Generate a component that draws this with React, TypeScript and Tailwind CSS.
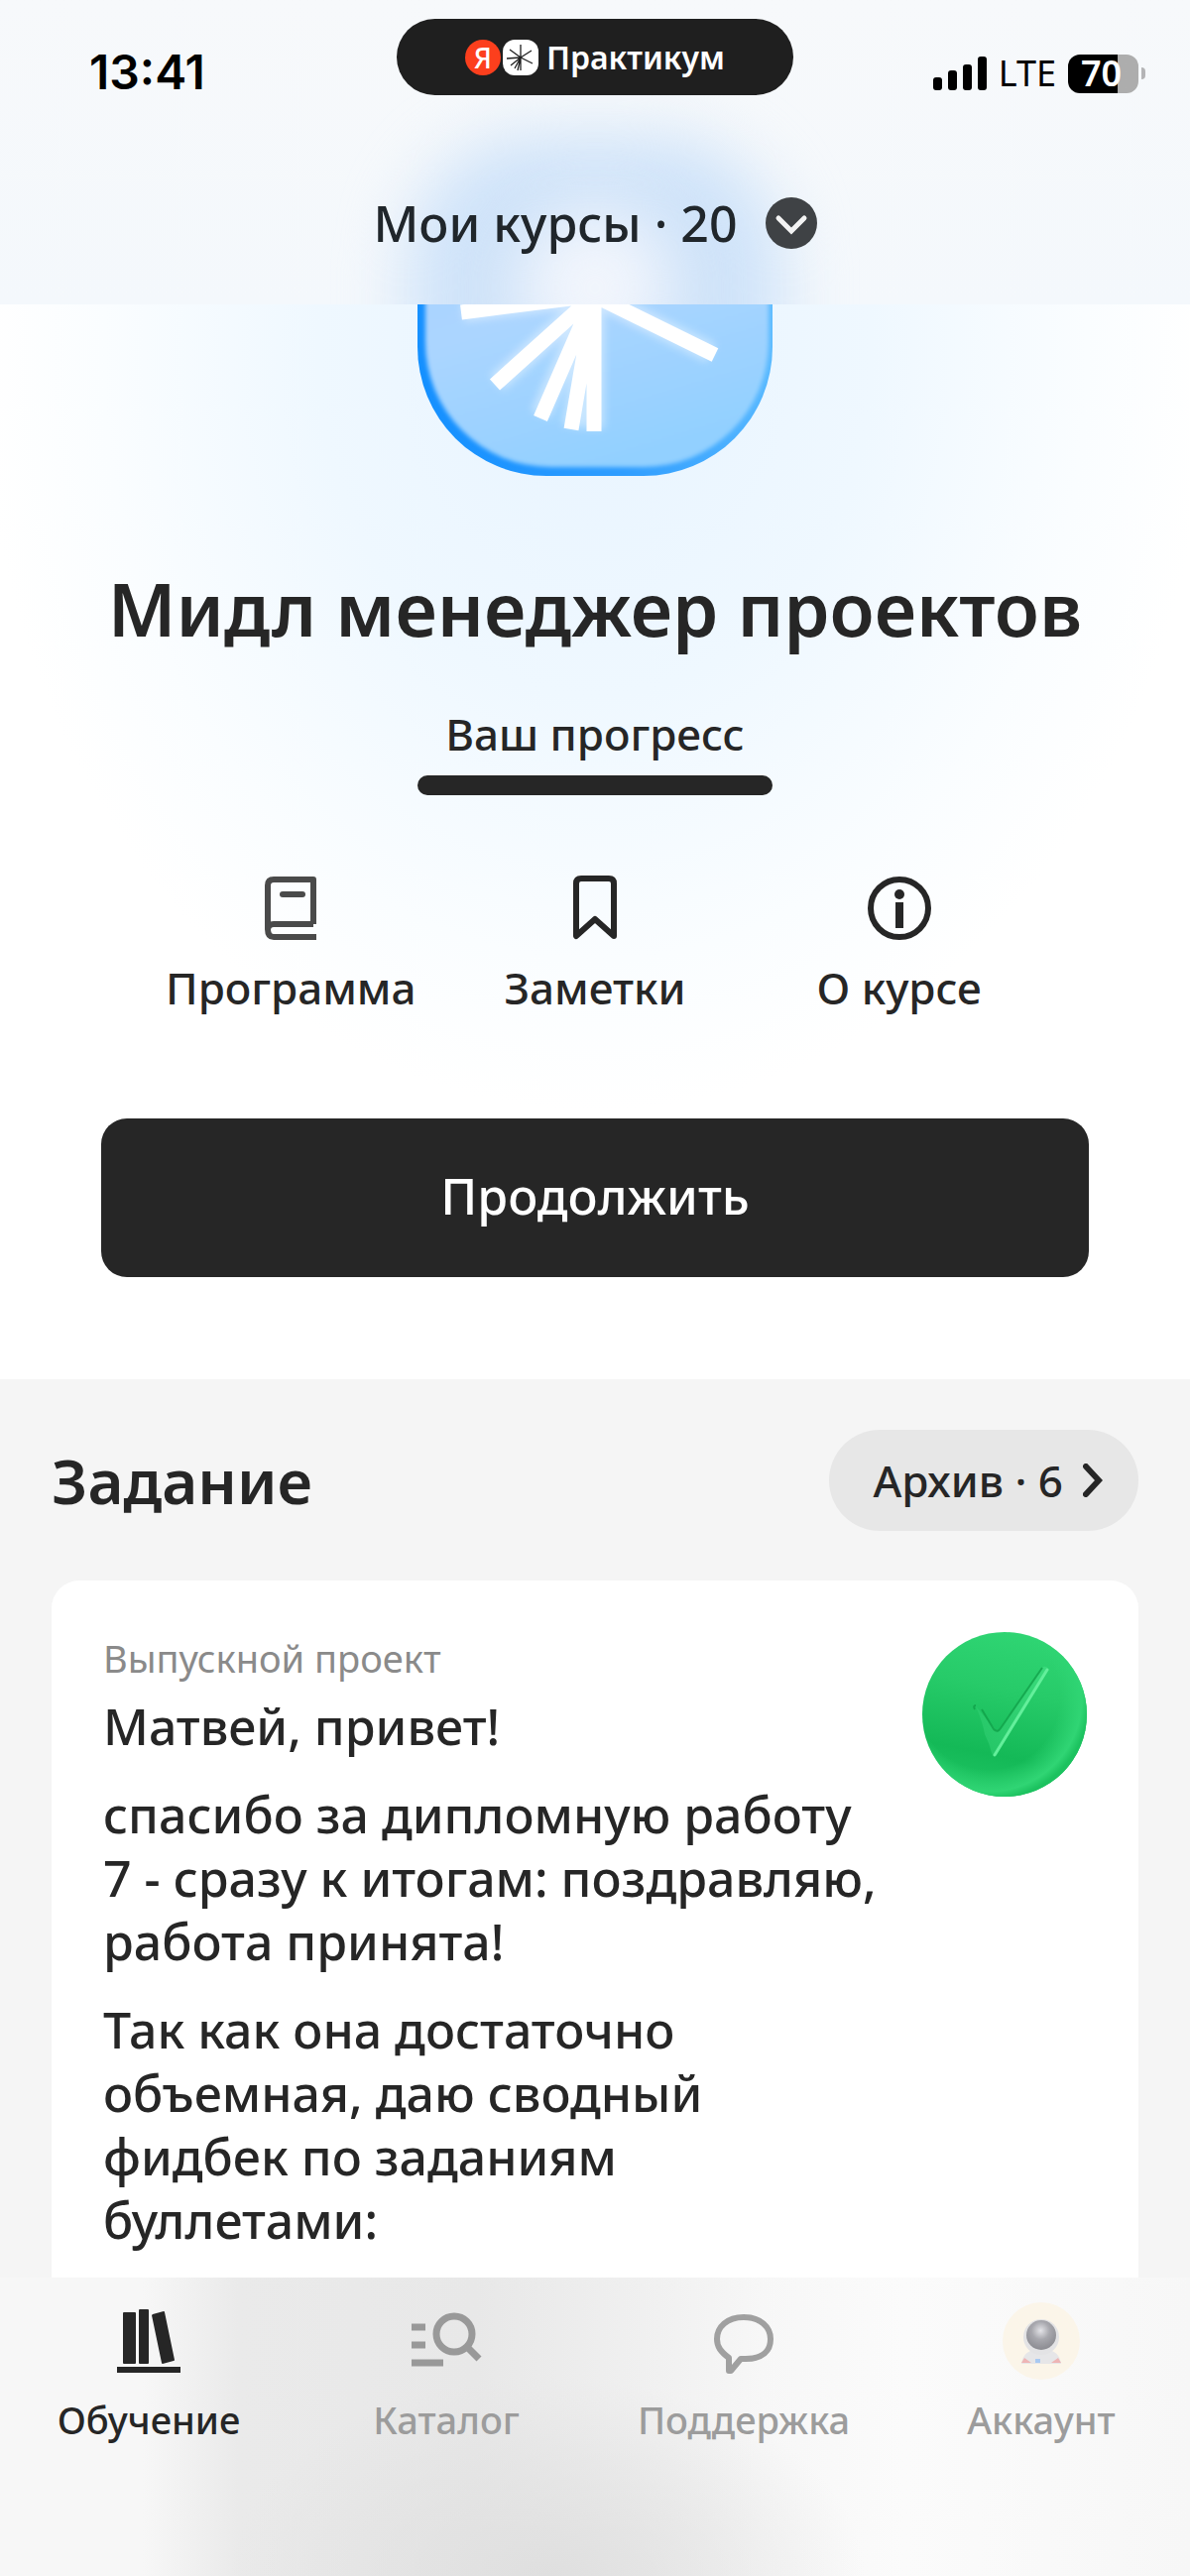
import React from 'react';

type IconProps = { className?: string };

function SparkIcon({ className }: IconProps) {
  return (
    <svg viewBox="0 0 36 36" className={className} aria-hidden="true">
      <rect width="36" height="36" rx="12" fill="#fff" />
      <path
        d="M18 18V5M18 18l11-7M18 18l12 6M18 18v13M18 18l-3 13M18 18l-6 11M18 18L8 26M18 18L4 19M18 18L7 10"
        stroke="#1f1f1f"
        strokeWidth="1.3"
      />
    </svg>
  );
}

function CourseLogo({ className }: IconProps) {
  return (
    <svg viewBox="0 0 358 358" className={className} aria-hidden="true">
      <defs>
        <linearGradient id="tile" x1="0.2" y1="0" x2="0.5" y2="1">
          <stop offset="0" stopColor="#a9cdff" />
          <stop offset="0.55" stopColor="#abd5ff" />
          <stop offset="1" stopColor="#92d0ff" />
        </linearGradient>
        <linearGradient id="rim" x1="0" y1="0.7" x2="1" y2="0.5">
          <stop offset="0" stopColor="#1590ff" />
          <stop offset="0.5" stopColor="#2f9dff" />
          <stop offset="1" stopColor="#5dbcff" />
        </linearGradient>
        <filter id="rimBlur" x="-10%" y="-10%" width="120%" height="120%">
          <feGaussianBlur stdDeviation="2" />
        </filter>
        <filter id="glow" x="-10%" y="-10%" width="120%" height="120%">
          <feGaussianBlur stdDeviation="4" />
        </filter>
        <clipPath id="tileClip">
          <rect width="358" height="358" rx="130" />
        </clipPath>
      </defs>
      <g clipPath="url(#tileClip)">
        <rect width="358" height="358" fill="url(#rim)" />
        <rect x="8" y="4" width="346" height="345" rx="126" fill="url(#tile)" filter="url(#rimBlur)" />
      </g>
      <path
        d="M178 176V310M178 176L156 308M178 176L124 296M178 176L80 264M178 176L46 192M178 176L296 234"
        stroke="#fff"
        strokeWidth="20"
        opacity="0.45"
        filter="url(#glow)"
      />
      <path
        d="M178 170V44M178 176V313M178 176L155 311M178 176L124 300M178 176L78 266M178 176L44 193M178 176L300 236M178 176L286 106M178 176L70 96"
        stroke="#fff"
        strokeWidth="15"
      />
    </svg>
  );
}

function BookIcon({ className }: IconProps) {
  return (
    <svg viewBox="0 0 72 72" className={className} fill="none" stroke="#4a4a4a" strokeWidth="6" aria-hidden="true">
      <path d="M59 52V7H19q-6 0-6 6v44q0 8 6 8h43M13 58q0-6 6-6h40" strokeLinejoin="round" />
      <path d="M28 22h20" strokeLinecap="round" />
    </svg>
  );
}

function BookmarkIcon({ className }: IconProps) {
  return (
    <svg viewBox="0 0 72 72" className={className} fill="none" stroke="#262626" strokeWidth="6" strokeLinejoin="round" aria-hidden="true">
      <path d="M17 64V11q0-5 5-5h28q5 0 5 5v53L36 47z" />
    </svg>
  );
}

function InfoIcon({ className }: IconProps) {
  return (
    <svg viewBox="0 0 72 72" className={className} aria-hidden="true">
      <circle cx="36" cy="36" r="29" fill="none" stroke="#262626" strokeWidth="6" />
      <circle cx="36" cy="22" r="5" fill="#262626" />
      <rect x="32" y="30" width="8" height="26" fill="#262626" />
    </svg>
  );
}

function DoneBadge({ className }: IconProps) {
  return (
    <svg viewBox="0 0 166 166" className={className} role="img" aria-label="Принято">
      <defs>
        <linearGradient id="green" x1="0.6" y1="0" x2="0.4" y2="1">
          <stop offset="0" stopColor="#2fd573" />
          <stop offset="0.35" stopColor="#27cb69" />
          <stop offset="0.75" stopColor="#14b957" />
          <stop offset="1" stopColor="#1fc563" />
        </linearGradient>
        <radialGradient id="edge" cx="0.4" cy="0.4" r="0.62">
          <stop offset="0.7" stopColor="#30d574" stopOpacity="0" />
          <stop offset="0.92" stopColor="#30d574" />
          <stop offset="1" stopColor="#1cc25f" />
        </radialGradient>
        <linearGradient id="tick" x1="0" y1="1" x2="1" y2="0">
          <stop offset="0" stopColor="#23c465" />
          <stop offset="1" stopColor="#3adb7c" />
        </linearGradient>
      </defs>
      <circle cx="83" cy="83" r="83" fill="url(#green)" />
      <circle cx="83" cy="83" r="83" fill="url(#edge)" />
      <path d="M54 75L76 101L121 36q3-3 6 1L75 124q-3 3-5-2-2-9-7-19-2-12-9-28z" fill="url(#tick)" />
      <path d="M53 78q-2-4 1-4M60 78l12 20q4 4 7-1L121 36" fill="none" stroke="#10a049" strokeWidth="2" opacity="0.8" />
      <path d="M126 38L73 124" stroke="#63ef9b" strokeWidth="3" strokeLinecap="round" />
    </svg>
  );
}

function BooksIcon({ className }: IconProps) {
  return (
    <svg viewBox="0 0 72 72" className={className} fill="#262626" aria-hidden="true">
      <rect x="10" y="7" width="13" height="52" rx="1" />
      <rect x="26" y="4" width="10" height="55" rx="1" />
      <path d="M40 9l11-3q1 0 1 1l10 48q0 1-1 1l-11 3q-1 0-1-1L39 10z" />
      <rect x="4" y="62" width="64" height="6" />
    </svg>
  );
}

function CatalogIcon({ className }: IconProps) {
  return (
    <svg viewBox="0 0 72 72" className={className} fill="none" stroke="#999" strokeWidth="7" aria-hidden="true">
      <path d="M1 22h14M1 40h14M1 58h32" />
      <circle cx="44" cy="29" r="18" />
      <path d="M57 42l12 12" />
    </svg>
  );
}

function ChatIcon({ className }: IconProps) {
  return (
    <svg viewBox="0 0 72 72" className={className} fill="none" stroke="#a0a0a0" strokeWidth="6" strokeLinejoin="round" aria-hidden="true">
      <path d="M36 12C19 12 9 22 9 34c0 8 4 13 12 19v13h2l10-12h5c17 0 25-8 25-20S53 12 36 12z" />
    </svg>
  );
}

function AccountIcon({ className }: IconProps) {
  return (
    <svg viewBox="0 0 80 80" className={className} aria-hidden="true">
      <defs>
        <radialGradient id="visor" cx="0.48" cy="0.35" r="0.6">
          <stop offset="0" stopColor="#e4e4e8" />
          <stop offset="0.5" stopColor="#a8a8ae" />
          <stop offset="1" stopColor="#8f8f95" />
        </radialGradient>
      </defs>
      <circle cx="40" cy="40" r="39" fill="#fbf5e9" />
      <path d="M20 63q2-13 14-14h12q12 1 14 14z" fill="#e6e6e8" />
      <path d="M20 62l3-5 7 5zM60 62l-3-5-7 5z" fill="#eeb5b5" />
      <rect x="34" y="58" width="5" height="4" fill="#a9c9f2" />
      <circle cx="40" cy="36" r="18" fill="#e3e3e5" />
      <circle cx="40" cy="34" r="15" fill="url(#visor)" />
    </svg>
  );
}

const actions = [
  { label: 'Программа', icon: BookIcon },
  { label: 'Заметки', icon: BookmarkIcon },
  { label: 'О курсе', icon: InfoIcon },
];

const tabs = [
  { label: 'Обучение', icon: BooksIcon, active: true },
  { label: 'Каталог', icon: CatalogIcon, active: false },
  { label: 'Поддержка', icon: ChatIcon, active: false },
  { label: 'Аккаунт', icon: AccountIcon, active: false },
];

function StatusBar() {
  return (
    <div className="relative grid grid-cols-3 items-start px-[45px] pt-[19px]">
      <div className="pt-[22px] pl-[45px] font-['Inter',sans-serif] text-[48px] leading-[64px] font-semibold text-black">
        13:41
      </div>

      <div className="flex h-[77px] w-[400px] items-center justify-center justify-self-center rounded-full bg-[#1f1f1f]">
        <span className="flex size-9 items-center justify-center rounded-full bg-[#fc3f1d] text-[28px] font-medium text-white">
          Я
        </span>
        <SparkIcon className="ml-[2px] size-9" />
        <span className="ml-2 text-[32px] leading-10 font-semibold text-white">Практикум</span>
      </div>

      <div className="flex h-[110px] items-center justify-end">
        <svg viewBox="0 0 54 34" className="h-[34px] w-[54px]" aria-hidden="true">
          <rect x="0" y="21" width="9" height="13" rx="3" />
          <rect x="15" y="14" width="9" height="20" rx="3" />
          <rect x="30" y="8" width="9" height="26" rx="3" />
          <rect x="45" y="0" width="9" height="34" rx="3" />
        </svg>
        <span className="ml-3 text-[36px] leading-10 text-black">LTE</span>
        <span className="ml-3 flex h-[39px] w-[71px] items-center justify-center rounded-xl bg-linear-to-r from-black from-70% to-[#adadad] to-70% pr-1 text-[36px] font-semibold text-white">
          70
        </span>
        <span className="ml-[3px] h-3 w-1 rounded-r-full bg-[#b4b4b6]" />
      </div>
    </div>
  );
}

export default function App() {
  return (
    <div className="flex min-h-screen flex-col bg-white font-['Noto_Sans','Open_Sans',sans-serif] text-[#262626]">
      {/* Header */}
      <header className="sticky top-0 z-10 h-[307px] overflow-hidden bg-linear-to-b from-[#f7f9fb] to-[#f4f8fc]">
        {/* Frosted glow of the course logo */}
        <div className="absolute top-[136px] left-1/2 h-[358px] w-[380px] -translate-x-1/2 rounded-[130px] bg-[#cfe3f9] blur-[32px]" />
        <div className="absolute top-[210px] left-1/2 h-[160px] w-[150px] -translate-x-1/2 rounded-full bg-[#f1f5fc] blur-[32px]" />
        <StatusBar />
        <div className="relative flex justify-center pt-16">
          <button type="button" className="flex items-center gap-7 text-[50px] leading-[64px] font-medium text-[#20262b]">
            Мои курсы · 20
            <svg viewBox="0 0 52 52" className="size-[52px]" aria-hidden="true">
              <circle cx="26" cy="26" r="26" fill="#3f4245" />
              <path d="M13 21l13 13 13-13" fill="none" stroke="#f3f3f3" strokeWidth="5" strokeLinecap="round" />
            </svg>
          </button>
        </div>
      </header>

      {/* Course */}
      <section className="-mt-[307px] bg-[radial-gradient(ellipse_620px_760px_at_50%_360px,#e8f4ff_0%,#eff8ff_45%,#fafdff_80%,#ffffff_100%)] px-[102px] pt-[122px] pb-[103px]">
        <CourseLogo className="mx-auto size-[358px]" />
        <h1 className="mt-[82px] text-center text-[74px] leading-[104px] font-semibold whitespace-nowrap">
          Мидл менеджер проектов
        </h1>

        <div className="mx-auto mt-11 flex w-[358px] flex-col items-center">
          <span className="text-[44px] leading-[60px] font-medium">Ваш прогресс</span>
          <div role="progressbar" aria-label="Ваш прогресс" aria-valuenow={100} className="mt-3 h-5 w-full rounded-full bg-[#262626]" />
        </div>

        <div className="mt-[78px] grid grid-cols-3 px-[38px]">
          {actions.map(({ label, icon: Icon }) => (
            <button key={label} type="button" className="flex flex-col items-center gap-[14px] text-[44px] leading-[60px] font-medium">
              <Icon className="size-[72px]" />
              {label}
            </button>
          ))}
        </div>

        <button type="button" className="mt-[102px] h-[160px] w-full rounded-[26px] bg-[#262626] pb-1 text-[50px] font-medium text-white">
          Продолжить
        </button>
      </section>

      {/* Assignments */}
      <section className="flex flex-1 flex-col bg-[#f5f5f5] px-[52px] pt-[51px]">
        <div className="flex items-center justify-between">
          <h2 className="text-[62px] leading-[88px] font-semibold">Задание</h2>
          <button type="button" className="flex h-[102px] items-center gap-5 rounded-full bg-[#e7e7e7] pr-9 pl-11 text-[44px] font-medium">
            Архив · 6
            <svg viewBox="0 0 20 34" className="h-[34px] w-5" fill="none" stroke="#262626" strokeWidth="6" aria-hidden="true">
              <path d="M3 3l13 14L3 31" strokeLinecap="round" />
            </svg>
          </button>
        </div>

        <article className="mt-[50px] flex flex-1 items-start justify-between rounded-t-[28px] bg-white px-[52px] pt-[52px] pb-6">
          <div className="max-w-[790px]">
            <p className="text-[38px] leading-[52px] text-[#8a8a8a]">Выпускной проект</p>
            <div className="mt-[11px] flex flex-col gap-[25px] text-[50px] leading-[64px] font-medium">
              <p>Матвей, привет!</p>
              <p>спасибо за дипломную работу 7 - сразу к итогам: поздравляю, работа принята!</p>
              <p className="max-w-[640px]">Так как она достаточно объемная, даю сводный фидбек по заданиям буллетами:</p>
            </div>
          </div>
          <DoneBadge className="size-[166px] shrink-0" />
        </article>
      </section>

      {/* Tab bar */}
      <nav className="sticky bottom-0 grid h-[301px] grid-cols-4 items-start bg-[radial-gradient(ellipse_320px_200px_at_46%_100%,#dfdfdf_0%,#dfdfdf00_100%),linear-gradient(90deg,#f7f7f7_0%,#f7f7f7_12%,#eaeaea_20%,#e8e8e8_40%,#f0f0f0_54%,#f7f7f7_64%,#fbfbfb_76%,#f7f7f7_100%)] pt-6">
        {tabs.map(({ label, icon: Icon, active }) => (
          <a
            key={label}
            href="#"
            aria-current={active ? 'page' : undefined}
            className={active ? 'flex flex-col items-center' : 'flex flex-col items-center text-[#9c9c9c]'}
          >
            <span className="flex h-20 items-center">
              <Icon className={label === 'Аккаунт' ? 'size-20' : 'size-[72px]'} />
            </span>
            <span className="mt-[13px] text-[38px] leading-[52px] font-medium">{label}</span>
          </a>
        ))}
      </nav>
    </div>
  );
}
